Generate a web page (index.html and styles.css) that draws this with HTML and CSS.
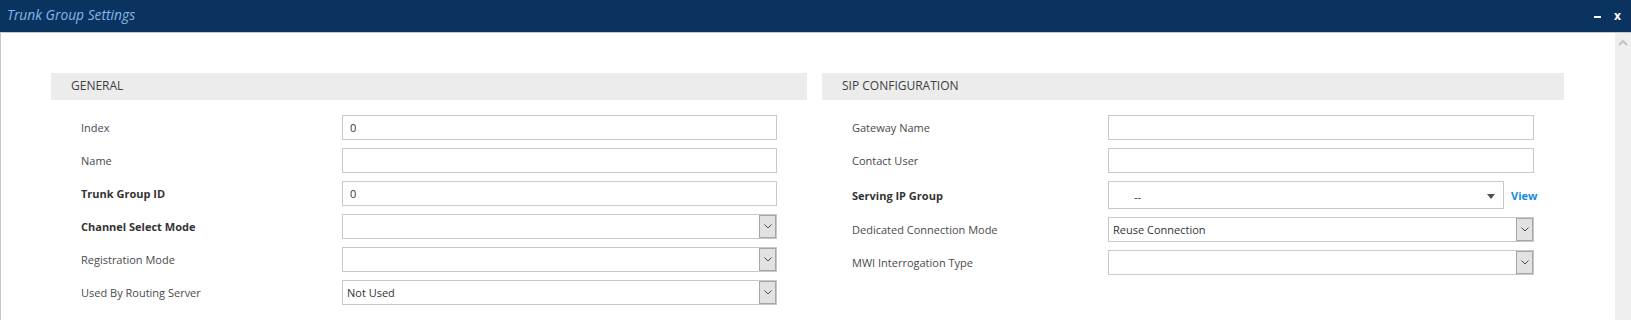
FILE: index.html
```html
<!DOCTYPE html>
<html lang="en">
<head>
    <meta charset="UTF-8">
    <meta name="viewport" content="width=device-width, initial-scale=1.0">
    <title>Trunk Group Settings</title>

    <link rel="stylesheet" href="styles.css">
</head>
<body>
    <div class="dialog">
        <div class="titlebar">
            <span class="title">Trunk Group Settings</span>
            <div class="controls">
                <span class="minimize"></span>
                <span class="close">x</span>
            </div>
        </div>

        <div class="dialog-body">
            <div class="content">
                <div class="panel panel-general">
                    <div class="panel-head">GENERAL</div>
                    <div class="panel-rows">
                        <div class="row">
                            <label for="index">Index</label>
                            <input type="text" id="index" value="0">
                        </div>
                        <div class="row">
                            <label for="name">Name</label>
                            <input type="text" id="name" value="">
                        </div>
                        <div class="row">
                            <label for="tg-id" class="required">Trunk Group ID</label>
                            <input type="text" id="tg-id" value="0">
                        </div>
                        <div class="row">
                            <label for="channel-mode" class="required">Channel Select Mode</label>
                            <div class="select-box">
                                <select id="channel-mode"><option></option></select>
                                <span class="select-btn"><svg width="8" height="5" viewBox="0 0 8 5"><polyline points="0.5,0.5 4,4 7.5,0.5" fill="none" stroke="#4a4a4a" stroke-width="1"/></svg></span>
                            </div>
                        </div>
                        <div class="row">
                            <label for="reg-mode">Registration Mode</label>
                            <div class="select-box">
                                <select id="reg-mode"><option></option></select>
                                <span class="select-btn"><svg width="8" height="5" viewBox="0 0 8 5"><polyline points="0.5,0.5 4,4 7.5,0.5" fill="none" stroke="#4a4a4a" stroke-width="1"/></svg></span>
                            </div>
                        </div>
                        <div class="row">
                            <label for="routing-server">Used By Routing Server</label>
                            <div class="select-box">
                                <select id="routing-server"><option>Not Used</option></select>
                                <span class="select-btn"><svg width="8" height="5" viewBox="0 0 8 5"><polyline points="0.5,0.5 4,4 7.5,0.5" fill="none" stroke="#4a4a4a" stroke-width="1"/></svg></span>
                            </div>
                        </div>
                    </div>
                </div>

                <div class="panel panel-sip">
                    <div class="panel-head">SIP CONFIGURATION</div>
                    <div class="panel-rows">
                        <div class="row">
                            <label for="gw-name">Gateway Name</label>
                            <input type="text" id="gw-name" value="">
                        </div>
                        <div class="row">
                            <label for="contact-user">Contact User</label>
                            <input type="text" id="contact-user" value="">
                        </div>
                        <div class="row row-tall">
                            <label for="ip-group" class="required">Serving IP Group</label>
                            <div class="lookup">
                                <div class="lookup-box">
                                    <span class="lookup-value">--</span>
                                    <span class="caret"></span>
                                </div>
                                <a href="#" class="view-link">View</a>
                            </div>
                        </div>
                        <div class="row">
                            <label for="conn-mode">Dedicated Connection Mode</label>
                            <div class="select-box">
                                <select id="conn-mode"><option>Reuse Connection</option></select>
                                <span class="select-btn"><svg width="8" height="5" viewBox="0 0 8 5"><polyline points="0.5,0.5 4,4 7.5,0.5" fill="none" stroke="#4a4a4a" stroke-width="1"/></svg></span>
                            </div>
                        </div>
                        <div class="row">
                            <label for="mwi-type">MWI Interrogation Type</label>
                            <div class="select-box">
                                <select id="mwi-type"><option></option></select>
                                <span class="select-btn"><svg width="8" height="5" viewBox="0 0 8 5"><polyline points="0.5,0.5 4,4 7.5,0.5" fill="none" stroke="#4a4a4a" stroke-width="1"/></svg></span>
                            </div>
                        </div>
                    </div>
                </div>
            </div>

            <div class="scrollbar">
                <svg width="10" height="7" viewBox="0 0 10 7"><polyline points="1,6 5,2 9,6" fill="none" stroke="#c4c4c4" stroke-width="2.2"/></svg>
            </div>
        </div>
    </div>
</body>
</html>
```

FILE: styles.css
```css
body {
    font-family: 'Open Sans', 'Liberation Sans', sans-serif;
    margin: 0;
    padding: 0;
    background-color: #fff;
    height: 320px;
    overflow: hidden;
}

.dialog {
    width: 1631px;
    height: 320px;
    display: flex;
    flex-direction: column;
}

.titlebar {
    height: 32px;
    background-color: #0b335f;
    border-bottom: 1px solid #c9c9c9;
    display: flex;
    align-items: center;
    justify-content: space-between;
    flex-shrink: 0;
}

.title {
    font-style: italic;
    font-size: 13.8px;
    color: #86b6ea;
    padding-left: 7px;
    margin-top: -4px;
}

.controls {
    display: flex;
    align-items: center;
    gap: 13px;
    padding-right: 10px;
}

.minimize {
    display: block;
    width: 7px;
    height: 2px;
    background-color: #fff;
    margin-top: 2px;
}

.close {
    color: #fff;
    font-size: 12px;
    font-weight: bold;
    line-height: 1;
    margin-top: -1px;
}

.dialog-body {
    flex: 1;
    display: flex;
    border-left: 1px solid #c9c9c9;
}

.content {
    flex: 1;
    display: flex;
    padding: 40px 0 0 50px;
}

.panel-general {
    width: 756px;
}

.panel-sip {
    width: 742px;
    margin-left: 15px;
}

.panel-head {
    height: 27px;
    line-height: 26px;
    background-color: #ececec;
    padding-left: 20px;
    font-size: 12px;
    color: #3f3f3f;
}

.panel-rows {
    padding: 15px 30px 0 30px;
    display: flex;
    flex-direction: column;
    gap: 8px;
}

.row {
    display: flex;
    align-items: center;
    height: 25px;
}

.row-tall {
    height: 28px;
}

label {
    font-size: 11px;
    color: #4a4a4a;
    flex-shrink: 0;
}

.panel-general label {
    width: 261px;
}

.panel-sip label {
    width: 256px;
}

label.required {
    font-weight: bold;
    color: #333;
}

input, .select-box, .lookup {
    flex: 1;
    height: 25px;
    box-sizing: border-box;
}

input {
    border: 1px solid #c6c9d2;
    padding: 0 7px;
    font-family: inherit;
    font-size: 11px;
    color: #333;
    outline: none;
}

.select-box {
    display: flex;
    border: 1px solid #c6c9d2;
}

.select-box select {
    flex: 1;
    appearance: none;
    -webkit-appearance: none;
    border: none;
    background: #fff;
    padding: 0 4px;
    font-family: inherit;
    font-size: 11px;
    color: #333;
    outline: none;
}

.select-btn {
    width: 15px;
    background-color: #e2e2e2;
    border: 1px solid #a6a6a6;
    display: flex;
    align-items: center;
    justify-content: center;
}

.lookup {
    height: 28px;
    display: flex;
    align-items: center;
}

.lookup-box {
    flex: 1;
    height: 28px;
    box-sizing: border-box;
    border: 1px solid #c6c9d2;
    display: flex;
    align-items: center;
    justify-content: space-between;
    padding: 0 8px 0 25px;
}

.lookup-value {
    font-size: 11px;
    color: #333;
    margin-top: 3px;
}

.caret {
    width: 0;
    height: 0;
    border-left: 4px solid transparent;
    border-right: 4px solid transparent;
    border-top: 5px solid #4f4f4f;
    margin-top: 2px;
}

.view-link {
    width: 23px;
    margin-left: 7px;
    font-size: 11px;
    font-weight: bold;
    color: #1a8ad8;
    text-decoration: none;
    white-space: nowrap;
}

.scrollbar {
    width: 16px;
    background-color: #efefef;
    display: flex;
    justify-content: center;
    align-items: flex-start;
    padding-top: 6px;
    box-sizing: border-box;
    flex-shrink: 0;
}
```
